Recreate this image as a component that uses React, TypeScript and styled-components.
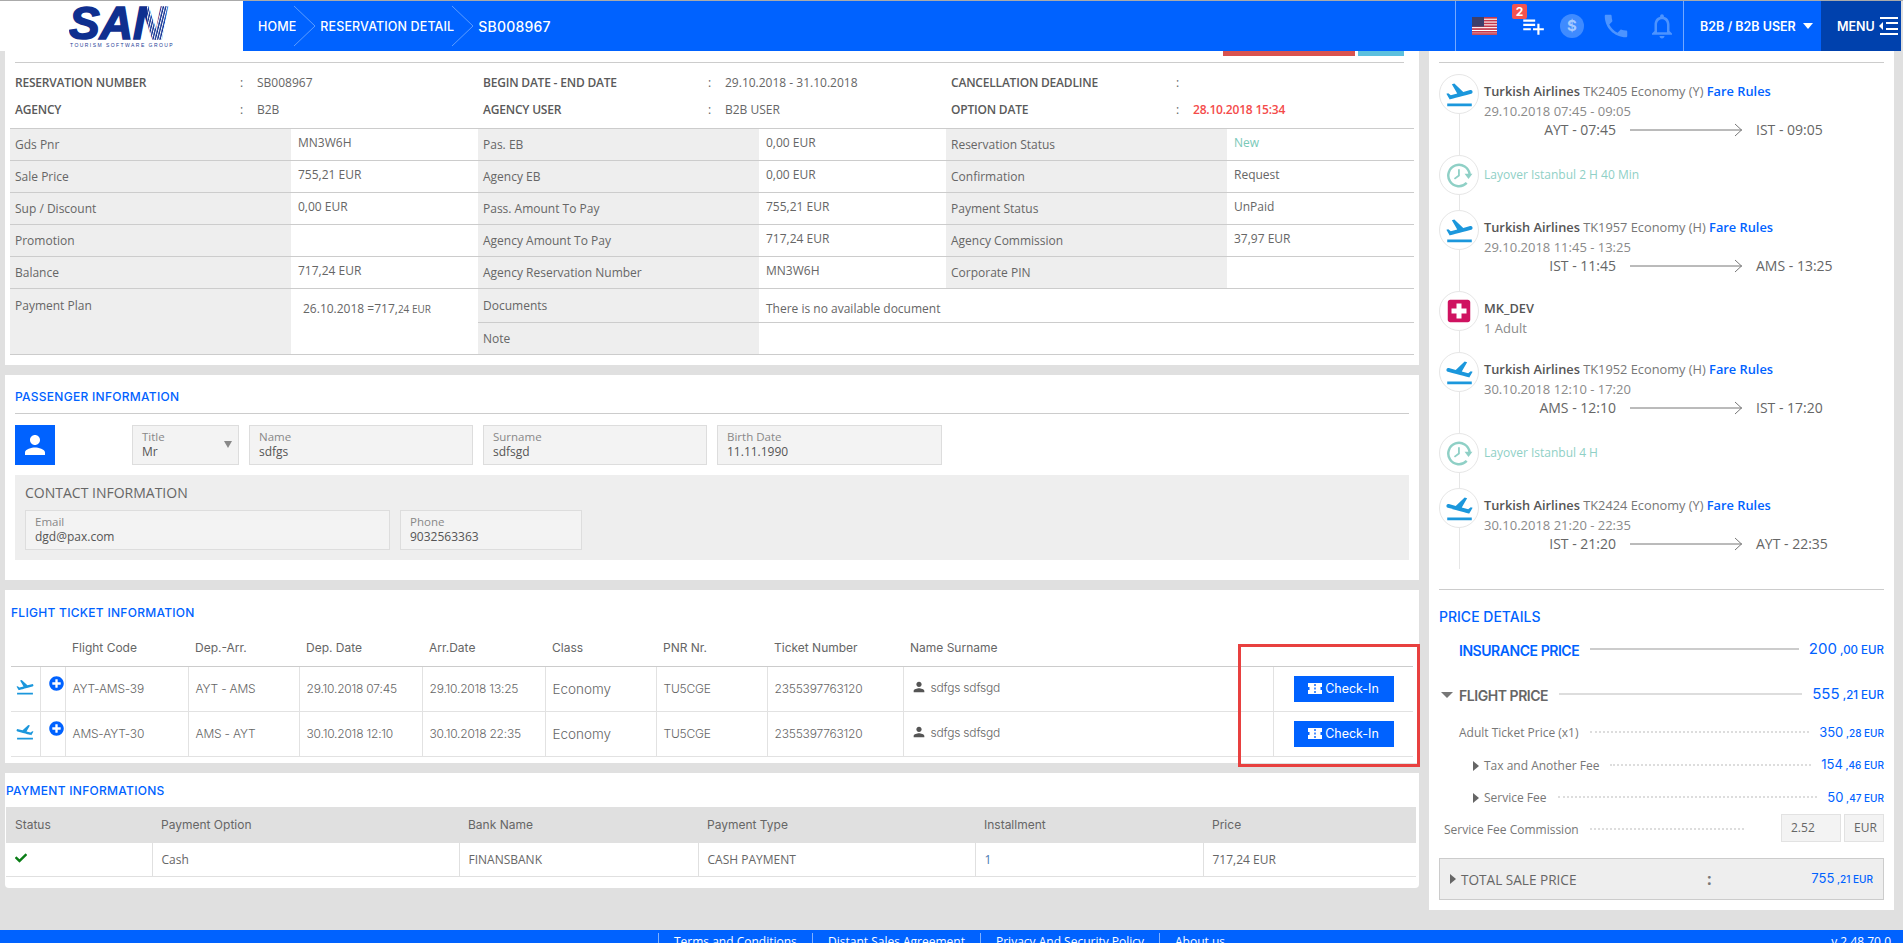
import React from "react";
import styled, { createGlobalStyle } from "styled-components";
import {
  MdFlightTakeoff,
  MdPlaylistAdd,
  MdPhone,
  MdNotificationsNone,
  MdPerson,
  MdLocalHospital,
} from "react-icons/md";
import { FaCheck, FaPlusCircle } from "react-icons/fa";

const BLUE = "#0062ff";
const BODY_FONT = `"Open Sans", "Liberation Sans", sans-serif`;
const HEAD_FONT = `Inter, "Open Sans", sans-serif`;

const GlobalStyle = createGlobalStyle`
  * { box-sizing: border-box; }
  html, body { margin: 0; padding: 0; background: #e0e0e0; }
  body { font-family: ${BODY_FONT}; color: #666; }
`;

const Page = styled.div`
  width: 1903px;
  height: 943px;
  overflow: hidden;
  position: relative;
  background: #e0e0e0;
  border-top: 1px solid #aaa;
  display: flex;
  flex-direction: column;
`;

/* header */
const Header = styled.header`
  width: 1901px;
  height: 50px;
  flex: none;
  display: flex;
`;
const LogoBox = styled.div`
  width: 243px;
  background: #fff;
  padding: 2px 0 0 69px;
`;
const TopBar = styled.div`
  flex: 1;
  display: flex;
  align-items: center;
  background: ${BLUE};
  color: #fff;
  font-family: ${HEAD_FONT};
`;
const Crumbs = styled.nav`
  flex: 1;
  height: 100%;
  display: flex;
  align-items: center;
  padding-left: 15px;
`;
const Crumb = styled.span<{ $big?: boolean }>`
  font-size: ${(p) => (p.$big ? "14px" : "12.5px")};
  font-weight: 500;
  letter-spacing: ${(p) => (p.$big ? "0.2px" : "0.12px")};
`;
const CrumbArrow = styled.svg`
  width: 22px;
  height: 44px;
  margin: 0 4px 0 -2px;
  flex: none;
`;
const IconCell = styled.div`
  width: 228px;
  height: 100%;
  display: grid;
  grid-template-columns: 57px 40px 38px 49px 43px;
  align-items: center;
  justify-items: center;
  border-left: 1px solid rgba(255, 255, 255, 0.45);
`;
const ActionIcon = styled.span<{ $muted?: boolean }>`
  position: relative;
  display: flex;
  color: ${(p) => (p.$muted ? "#4d94ff" : "#fff")};
`;
const Badge = styled.span`
  position: absolute;
  top: -9px;
  left: -8px;
  width: 15px;
  height: 15px;
  border-radius: 2px;
  background: #f4534f;
  color: #fff;
  font-size: 12px;
  font-weight: 700;
  line-height: 15px;
  text-align: center;
`;
const DollarIcon = styled.span`
  width: 24px;
  height: 24px;
  border-radius: 50%;
  background: #3f8bff;
  color: #a5c9ff;
  font-size: 15px;
  font-weight: 700;
  line-height: 24px;
  text-align: center;
`;
const UserCell = styled.div`
  width: 138px;
  height: 100%;
  display: flex;
  align-items: center;
  padding-left: 16px;
  font-size: 12.5px;
  font-weight: 600;
  border-left: 1px solid rgba(255, 255, 255, 0.45);
`;
const Caret = styled.i`
  margin-left: 7px;
  border: 5.5px solid transparent;
  border-top: 6px solid #fff;
  border-bottom: 0;
`;
const MenuCell = styled.div`
  width: 80px;
  height: 100%;
  display: flex;
  align-items: center;
  padding-left: 16px;
  gap: 4px;
  background: #0041ad;
  font-size: 12.5px;
  font-weight: 600;
`;

/* layout */
const Body = styled.div`
  flex: none;
  height: 879px;
  display: flex;
  align-items: flex-start;
  gap: 10px;
  padding-left: 5px;
`;
const MainColumn = styled.main`
  width: 1414px;
  display: flex;
  flex-direction: column;
  gap: 10px;
`;
const Card = styled.section<{ $height: number; $round?: boolean }>`
  height: ${(p) => p.$height}px;
  background: #fff;
  border-radius: ${(p) => (p.$round ? "0 0 4px 4px" : "0")};
`;
const ActionStrip = styled.div`
  height: 12px;
  display: flex;
  justify-content: flex-end;
  align-items: flex-start;
  gap: 3px;
  margin: 0 15px 0 10px;
  border-bottom: 1px solid #ccc;
`;
const StripButton = styled.span<{ $color: string; $width: number }>`
  width: ${(p) => p.$width}px;
  height: 5px;
  background: ${(p) => p.$color};
`;
const SummaryGrid = styled.div`
  height: 65px;
  padding: 6px 0 0 10px;
  display: grid;
  grid-template-columns: 225px 17px 226px 225px 17px 226px 225px 17px 1fr;
  grid-auto-rows: 27px;
  align-items: center;
  font-size: 12px;
`;
const SummaryLabel = styled.span`
  font-weight: 600;
  color: #5a5a5a;
  letter-spacing: -0.2px;
`;
const SummaryValue = styled.span<{ $alert?: boolean }>`
  color: ${(p) => (p.$alert ? "#f44a4a" : "#666")};
  font-weight: ${(p) => (p.$alert ? 600 : 400)};
  letter-spacing: ${(p) => (p.$alert ? "-0.2px" : "0")};
`;
const InfoTable = styled.table`
  width: 1404px;
  margin-left: 5px;
  table-layout: fixed;
  border-collapse: collapse;
  font-size: 12px;
  border-bottom: 1px solid #ccc;
  td {
    height: 32px;
    padding: 0;
    border-top: 1px solid #ccc;
  }
`;
const DocRow = styled.tr`
  && td {
    height: 34px;
  }
`;
const LabelCell = styled.td<{ $tall?: boolean }>`
  background: #eee;
  padding: 0 0 0 5px !important;
  vertical-align: ${(p) => (p.$tall ? "top" : "middle")};
  line-height: ${(p) => (p.$tall ? "33px" : "normal")};
  color: #666;
`;
const ValueCell = styled.td<{ $tone?: string }>`
  padding: 0 0 4px 7px !important;
  color: ${(p) => p.$tone || "#666"};
`;
const DocCell = styled.td`
  padding: 6px 0 0 7px !important;
`;
const PlanCell = styled.td`
  vertical-align: top;
  padding: 11px 0 0 12px !important;
  small {
    font-size: 10px;
  }
`;
const Title = styled.h2<{ $left: number; $top: number }>`
  margin: 0;
  padding: ${(p) => p.$top}px 0 0 ${(p) => p.$left}px;
  font: 500 12px/18px ${HEAD_FONT};
  color: ${BLUE};
  letter-spacing: 0.28px;
`;
const PassengerTitle = styled(Title)`
  margin: 0 10px;
  padding-left: 0;
  padding-bottom: 7px;
  border-bottom: 1px solid #ccc;
`;
const PassengerRow = styled.div`
  display: flex;
  margin: 11px 0 10px 10px;
  height: 40px;
`;
const Avatar = styled.div`
  width: 40px;
  height: 40px;
  margin-right: 77px;
  background: ${BLUE};
  color: #fff;
  display: flex;
  align-items: center;
  justify-content: center;
`;
const Field = styled.div<{ $width: number }>`
  position: relative;
  width: ${(p) => p.$width}px;
  height: 40px;
  margin-right: 10px;
  padding: 3px 0 0 9px;
  background: #f3f3f3;
  border: 1px solid #ddd;
  display: flex;
  flex-direction: column;
`;
const FieldLabel = styled.span`
  font-size: 11.5px;
  line-height: 15px;
  color: #888;
`;
const FieldValue = styled.span`
  font-size: 12px;
  line-height: 15px;
  color: #555;
`;
const SelectArrow = styled.i`
  position: absolute;
  right: 6px;
  top: 15px;
  border: 4px solid transparent;
  border-top: 7px solid #888;
  border-bottom: 0;
`;
const ContactBox = styled.div`
  height: 85px;
  margin: 0 10px;
  padding: 9px 10px 0;
  background: #eee;
`;
const ContactTitle = styled.h3`
  margin: 0 0 8px;
  font-size: 14px;
  font-weight: 400;
  line-height: 18px;
  color: #666;
`;
const ContactFields = styled.div`
  display: flex;
`;
const GridTable = styled.table<{ $width: number; $left: number; $top: number }>`
  width: ${(p) => p.$width}px;
  margin: ${(p) => p.$top}px 0 0 ${(p) => p.$left}px;
  table-layout: fixed;
  border-collapse: collapse;
  font-family: ${HEAD_FONT};
  font-size: 12px;
  color: #666;
`;
const FlightHead = styled.th`
  height: 39px;
  padding: 3px 0 0 7px;
  text-align: left;
  font-weight: 400;
  border-bottom: 1px solid #ccc;
`;
const FlightCell = styled.td<{ $center?: boolean; $wide?: boolean }>`
  height: 45px;
  padding: ${(p) => (p.$center ? "0" : "0 0 0 7px")};
  text-align: ${(p) => (p.$center ? "center" : "left")};
  font-weight: 300;
  font-size: ${(p) => (p.$wide ? "13.5px" : "12px")};
  letter-spacing: ${(p) => (p.$wide ? "0" : "-0.2px")};
  border-left: 1px solid #e2e2e2;
  border-bottom: 1px solid #e2e2e2;
  &:first-child {
    border-left: 0;
  }
`;
const PlusMark = styled.span`
  display: block;
  margin: -10px 0 0 7px;
  color: ${BLUE};
  line-height: 0;
`;
const ReturnPlane = styled(MdFlightTakeoff)`
  transform: scaleX(-1);
`;
const PaxName = styled.span`
  display: inline-flex;
  align-items: center;
  gap: 4px;
  svg {
    color: #555;
  }
`;
const CheckInButton = styled.button`
  margin-left: 13px;
  width: 100px;
  height: 26px;
  padding: 0;
  border: 0;
  background: ${BLUE};
  color: #fff;
  font-family: ${HEAD_FONT};
  font-size: 12.5px;
  display: inline-flex;
  align-items: center;
  justify-content: center;
  gap: 3px;
`;
const PayHead = styled.th`
  height: 36px;
  padding: 0 0 1px 9px;
  background: #e0e0e0;
  font-weight: 400;
  text-align: left;
`;
const PayCell = styled.td<{ $tone?: string }>`
  height: 33px;
  padding: 0 0 0 9px;
  font-family: ${BODY_FONT};
  color: ${(p) => p.$tone || "#666"};
  border-left: 1px solid #e0e0e0;
  border-bottom: 1px solid #e0e0e0;
  &:first-child {
    border-left: 0;
    color: #0a7d16;
  }
`;
const Marker = styled.div`
  position: absolute;
  left: 1238px;
  top: 643px;
  width: 182px;
  height: 123px;
  border: 3px solid #e8403f;
`;

/* sidebar */
const Side = styled.aside`
  width: 465px;
  height: 859px;
  padding: 0 10px;
  background: #fff;
`;
const SideStrip = styled.div`
  height: 12px;
  border-bottom: 1px solid #ccc;
`;
const Timeline = styled.div`
  margin-top: 11px;
  padding-bottom: 20px;
  border-bottom: 1px solid #ccc;
`;
const Step = styled.div<{ $height: number }>`
  height: ${(p) => p.$height}px;
  display: flex;
  gap: 5px;
`;
const StepRail = styled.div`
  width: 40px;
  flex: none;
  display: flex;
  flex-direction: column;
  align-items: center;
`;
const StepCircle = styled.div<{ $color?: string }>`
  width: 40px;
  height: 40px;
  flex: none;
  border: 1px solid #e6e6e6;
  border-radius: 50%;
  display: flex;
  align-items: center;
  justify-content: center;
  color: ${(p) => p.$color || "#1b97dc"};
`;
const StepLine = styled.div`
  flex: 1;
  width: 1px;
  background: #e6e6e6;
`;
const StepBody = styled.div`
  flex: 1;
  padding-top: 7px;
`;
const StepTitle = styled.div`
  font-size: 12.8px;
  line-height: 20px;
  color: #777;
  white-space: pre;
  b {
    font-weight: 600;
    color: #555;
  }
  a {
    font-weight: 600;
    color: ${BLUE};
  }
`;
const StepSub = styled.div`
  font-size: 13px;
  line-height: 20px;
  color: #8a8a8a;
`;
const LayoverText = styled.div`
  font-size: 12px;
  line-height: 40px;
  color: #8fd0c6;
`;
const Route = styled.div`
  display: grid;
  grid-template-columns: 132px 112px 1fr;
  column-gap: 14px;
  align-items: center;
  font-size: 14px;
  line-height: 18px;
  color: #666;
`;
const RouteFrom = styled.span`
  text-align: right;
`;
const RouteArrow = styled.svg`
  width: 112px;
  height: 14px;
  display: block;
`;
const PriceTitle = styled.h2`
  margin: 0;
  padding: 17px 0 0;
  font: 500 14px/20px ${HEAD_FONT};
  color: ${BLUE};
`;
const PriceRow = styled.div<{ $height: number; $top?: number; $indent: number }>`
  height: ${(p) => p.$height}px;
  margin-top: ${(p) => p.$top || 0}px;
  padding-left: ${(p) => p.$indent}px;
  display: flex;
  align-items: center;
  position: relative;
`;
const PriceHeading = styled.span<{ $accent?: boolean }>`
  font: 600 14px ${HEAD_FONT};
  letter-spacing: -0.45px;
  color: ${(p) => (p.$accent ? BLUE : "#666")};
`;
const PriceLabel = styled.span`
  font-size: 12px;
  color: #777;
  white-space: nowrap;
  margin-top: -1px;
`;
const Leader = styled.i<{ $dotted?: boolean; $color?: string; $right?: number }>`
  flex: 1;
  margin: -2px ${(p) => p.$right ?? 10}px 0 11px;
  border-top: 2px ${(p) => (p.$dotted ? "dotted" : "solid")} ${(p) => p.$color || "#ddd"};
`;
const Amount = styled.span<{ $big?: boolean }>`
  font: 500 ${(p) => (p.$big ? "11.5px" : "10px")} ${HEAD_FONT};
  color: ${BLUE};
  white-space: nowrap;
  margin-top: -3px;
  b {
    font-weight: 400;
    font-size: ${(p) => (p.$big ? "15px" : "13px")};
  }
`;
const RowCaret = styled.i<{ $down?: boolean; $left: number }>`
  position: absolute;
  left: ${(p) => p.$left}px;
  top: 50%;
  margin-top: ${(p) => (p.$down ? "-3px" : "-5px")};
  border-style: solid;
  border-color: transparent;
  border-width: ${(p) => (p.$down ? "6px 6px 0" : "5px 0 5px 6px")};
  border-top-color: ${(p) => (p.$down ? "#777" : "transparent")};
  border-left-color: ${(p) => (p.$down ? "transparent" : "#666")};
`;
const MiniBox = styled.span<{ $width: number; $left?: number }>`
  width: ${(p) => p.$width}px;
  height: 28px;
  align-self: flex-start;
  margin-left: ${(p) => p.$left || 0}px;
  padding-left: 9px;
  background: #f3f3f3;
  border: 1px solid #e2e2e2;
  font-size: 12px;
  line-height: 26px;
  color: #666;
`;
const TotalBox = styled.div`
  position: relative;
  height: 42px;
  margin-top: 12px;
  padding: 0 10px 0 21px;
  display: flex;
  align-items: center;
  background: #eee;
  border: 1px solid #ccc;
`;
const TotalLabel = styled.span`
  width: 246px;
  font-size: 13.6px;
  color: #666;
`;
const TotalColon = styled.span`
  flex: 1;
  font-weight: 700;
  color: #777;
`;

/* footer */
const Footer = styled.footer`
  flex: none;
  height: 30px;
  padding: 3px 12px 0 658px;
  display: flex;
  background: ${BLUE};
  color: #fff;
  font-size: 12px;
  line-height: 18px;
`;
const FooterLink = styled.span<{ $width: number }>`
  width: ${(p) => p.$width}px;
  height: 24px;
  padding-left: 15px;
  border-left: 1px solid rgba(255, 255, 255, 0.5);
  &:last-of-type {
    border-right: 1px solid rgba(255, 255, 255, 0.5);
  }
`;
const Version = styled.span`
  margin-left: auto;
`;

const Logo = () => (
  <svg width="125" height="48" viewBox="0 0 125 48">
    <defs>
      <pattern id="stripe" width="2.4" height="4" patternUnits="userSpaceOnUse" patternTransform="skewX(-14)">
        <rect width="1" height="4" fill="#fff" />
      </pattern>
    </defs>
    <text
      x="0"
      y="36"
      fontFamily="Liberation Sans"
      fontWeight="700"
      fontStyle="italic"
      fontSize="46"
      fill="#0f2f8f"
      stroke="#0f2f8f"
      strokeWidth="1.6"
    >
      SAN
    </text>
    <rect x="78" y="0" width="21" height="38" fill="url(#stripe)" />
    <text x="1" y="44" fontFamily="Liberation Sans" fontSize="5" letterSpacing="1.45" fill="#1e3c96">
      TOURISM SOFTWARE GROUP
    </text>
  </svg>
);

const Flag = () => (
  <svg width="25" height="18" viewBox="0 0 25 18">
    <rect width="25" height="18" fill="#fff" />
    {[0, 2.8, 5.6, 8.4, 11.2, 14, 16.2].map((y) => (
      <rect key={y} y={y} width="25" height="1.7" fill="#c4384c" />
    ))}
    <rect width="12" height="9.6" fill="#3d3f6b" />
  </svg>
);

const MenuGlyph = () => (
  <svg width="19" height="18" viewBox="0 0 19 18" fill="#fff">
    <rect x="1" y="0" width="18" height="2" />
    <rect x="7" y="5" width="12" height="2" />
    <rect x="7" y="11" width="12" height="2" />
    <rect x="1" y="16" width="18" height="2" />
    <path d="M0 9l4-4v8z" />
  </svg>
);

const TicketGlyph = () => (
  <svg width="14" height="11" viewBox="0 0 14 11">
    <rect width="14" height="11" fill="#fff" />
    <rect x="0" y="4" width="1.500" height="3" fill="#0062ff" />
    <rect x="12.500" y="4" width="1.500" height="3" fill="#0062ff" />
    <rect x="6.300" y="1" width="1.400" height="2" fill="#0062ff" />
    <rect x="6.300" y="4.500" width="1.400" height="2" fill="#0062ff" />
    <rect x="6.300" y="8" width="1.400" height="2" fill="#0062ff" />
  </svg>
);

const LayoverIcon = () => (
  <svg width="27" height="27" viewBox="0 0 24 24" fill="none" stroke="#8fd0c6" strokeWidth="2.2">
    <path d="M21 11a9.500 9.500 0 1 0-2.600 7.600" />
    <path d="M11.500 6.500v5.500l-4 3" strokeWidth="1.600" />
    <path d="M16.500 10.500h7l-3.500 4.500z" fill="#8fd0c6" stroke="none" />
  </svg>
);

const ArrowLine = () => (
  <RouteArrow viewBox="0 0 112 14" fill="none" stroke="#777">
    <path d="M0 7h112M105 1l6.500 6-6.500 6" />
  </RouteArrow>
);

interface Leg {
  kind: "out" | "back";
  airline: string;
  detail: string;
  date: string;
  from: string;
  to: string;
}

const legs: Leg[] = [
  { kind: "out", airline: "Turkish Airlines", detail: "TK2405 Economy (Y)", date: "29.10.2018 07:45 - 09:05", from: "AYT - 07:45", to: "IST - 09:05" },
  { kind: "out", airline: "Turkish Airlines", detail: "TK1957 Economy (H)", date: "29.10.2018 11:45 - 13:25", from: "IST - 11:45", to: "AMS - 13:25" },
  { kind: "back", airline: "Turkish Airlines", detail: "TK1952 Economy (H)", date: "30.10.2018 12:10 - 17:20", from: "AMS - 12:10", to: "IST - 17:20" },
  { kind: "back", airline: "Turkish Airlines", detail: "TK2424 Economy (Y)", date: "30.10.2018 21:20 - 22:35", from: "IST - 21:20", to: "AYT - 22:35" },
];

const FlightStep = ({ leg }: { leg: Leg }) => (
  <Step $height={81}>
    <StepRail>
      <StepCircle>{leg.kind === "out" ? <MdFlightTakeoff size={31} /> : <ReturnPlane size={31} />}</StepCircle>
      <StepLine />
    </StepRail>
    <StepBody>
      <StepTitle>
        <b>{leg.airline}</b> {leg.detail} <a>Fare Rules</a>
      </StepTitle>
      <StepSub>{leg.date}</StepSub>
      <Route>
        <RouteFrom>{leg.from}</RouteFrom>
        <ArrowLine />
        <span>{leg.to}</span>
      </Route>
    </StepBody>
  </Step>
);

const LayoverStep = ({ text }: { text: string }) => (
  <Step $height={55}>
    <StepRail>
      <StepCircle>
        <LayoverIcon />
      </StepCircle>
      <StepLine />
    </StepRail>
    <LayoverText>{text}</LayoverText>
  </Step>
);

const infoRows = [
  ["Gds Pnr", "MN3W6H", "Pas. EB", "0,00 EUR", "Reservation Status", "New"],
  ["Sale Price", "755,21 EUR", "Agency EB", "0,00 EUR", "Confirmation", "Request"],
  ["Sup / Discount", "0,00 EUR", "Pass. Amount To Pay", "755,21 EUR", "Payment Status", "UnPaid"],
  ["Promotion", "", "Agency Amount To Pay", "717,24 EUR", "Agency Commission", "37,97 EUR"],
  ["Balance", "717,24 EUR", "Agency Reservation Number", "MN3W6H", "Corporate PIN", ""],
];

const tickets = [
  { kind: "out", code: "AYT-AMS-39", route: "AYT - AMS", dep: "29.10.2018 07:45", arr: "29.10.2018 13:25" },
  { kind: "back", code: "AMS-AYT-30", route: "AMS - AYT", dep: "30.10.2018 12:10", arr: "30.10.2018 22:35" },
];

export default function App() {
  return (
    <Page>
      <GlobalStyle />
      <Header>
        <LogoBox>
          <Logo />
        </LogoBox>
        <TopBar>
          <Crumbs>
            <Crumb>HOME</Crumb>
            <CrumbArrow viewBox="0 0 22 44" fill="none" stroke="#5c9dff">
              <path d="M0 2l21 20-21 20" />
            </CrumbArrow>
            <Crumb>RESERVATION DETAIL</Crumb>
            <CrumbArrow viewBox="0 0 22 44" fill="none" stroke="#5c9dff">
              <path d="M0 2l21 20-21 20" />
            </CrumbArrow>
            <Crumb $big>SB008967</Crumb>
          </Crumbs>
          <IconCell>
            <Flag />
            <ActionIcon>
              <MdPlaylistAdd size={26} />
              <Badge>2</Badge>
            </ActionIcon>
            <DollarIcon>$</DollarIcon>
            <ActionIcon $muted>
              <MdPhone size={30} />
            </ActionIcon>
            <ActionIcon $muted>
              <MdNotificationsNone size={30} />
            </ActionIcon>
          </IconCell>
          <UserCell>
            B2B / B2B USER
            <Caret />
          </UserCell>
          <MenuCell>
            MENU
            <MenuGlyph />
          </MenuCell>
        </TopBar>
      </Header>

      <Body>
        <MainColumn>
          <Card $height={314}>
            <ActionStrip>
              <StripButton $color="#d9534f" $width={132} />
              <StripButton $color="#5bc0de" $width={46} />
            </ActionStrip>
            <SummaryGrid>
              <SummaryLabel>RESERVATION NUMBER</SummaryLabel>
              <span>:</span>
              <SummaryValue>SB008967</SummaryValue>
              <SummaryLabel>BEGIN DATE - END DATE</SummaryLabel>
              <span>:</span>
              <SummaryValue>29.10.2018 - 31.10.2018</SummaryValue>
              <SummaryLabel>CANCELLATION DEADLINE</SummaryLabel>
              <span>:</span>
              <SummaryValue />
              <SummaryLabel>AGENCY</SummaryLabel>
              <span>:</span>
              <SummaryValue>B2B</SummaryValue>
              <SummaryLabel>AGENCY USER</SummaryLabel>
              <span>:</span>
              <SummaryValue>B2B USER</SummaryValue>
              <SummaryLabel>OPTION DATE</SummaryLabel>
              <span>:</span>
              <SummaryValue $alert>28.10.2018 15:34</SummaryValue>
            </SummaryGrid>
            <InfoTable>
              <colgroup>
                <col width="281" />
                <col width="187" />
                <col width="281" />
                <col width="187" />
                <col width="281" />
                <col width="187" />
              </colgroup>
              <tbody>
                {infoRows.map((r) => (
                  <tr key={r[0]}>
                    <LabelCell>{r[0]}</LabelCell>
                    <ValueCell>{r[1]}</ValueCell>
                    <LabelCell>{r[2]}</LabelCell>
                    <ValueCell>{r[3]}</ValueCell>
                    <LabelCell>{r[4]}</LabelCell>
                    <ValueCell $tone={r[5] === "New" ? "#79c9b8" : undefined}>{r[5]}</ValueCell>
                  </tr>
                ))}
                <DocRow>
                  <LabelCell rowSpan={2} $tall>
                    Payment Plan
                  </LabelCell>
                  <PlanCell rowSpan={2}>
                    26.10.2018 =717,<small>24 EUR</small>
                  </PlanCell>
                  <LabelCell $tall>Documents</LabelCell>
                  <DocCell colSpan={3}>There is no available document</DocCell>
                </DocRow>
                <tr>
                  <LabelCell>Note</LabelCell>
                  <ValueCell colSpan={3} />
                </tr>
              </tbody>
            </InfoTable>
          </Card>

          <Card $height={205}>
            <PassengerTitle $left={10} $top={13}>
              PASSENGER INFORMATION
            </PassengerTitle>
            <PassengerRow>
              <Avatar>
                <MdPerson size={30} />
              </Avatar>
              <Field $width={107}>
                <FieldLabel>Title</FieldLabel>
                <FieldValue>Mr</FieldValue>
                <SelectArrow />
              </Field>
              <Field $width={224}>
                <FieldLabel>Name</FieldLabel>
                <FieldValue>sdfgs</FieldValue>
              </Field>
              <Field $width={224}>
                <FieldLabel>Surname</FieldLabel>
                <FieldValue>sdfsgd</FieldValue>
              </Field>
              <Field $width={225}>
                <FieldLabel>Birth Date</FieldLabel>
                <FieldValue>11.11.1990</FieldValue>
              </Field>
            </PassengerRow>
            <ContactBox>
              <ContactTitle>CONTACT INFORMATION</ContactTitle>
              <ContactFields>
                <Field $width={365}>
                  <FieldLabel>Email</FieldLabel>
                  <FieldValue>dgd@pax.com</FieldValue>
                </Field>
                <Field $width={182}>
                  <FieldLabel>Phone</FieldLabel>
                  <FieldValue>9032563363</FieldValue>
                </Field>
              </ContactFields>
            </ContactBox>
          </Card>

          <Card $height={173}>
            <Title $left={6} $top={14}>
              FLIGHT TICKET INFORMATION
            </Title>
            <GridTable $width={1402} $left={6} $top={5}>
              <colgroup>
                {[29, 25, 123, 111, 123, 123, 111, 111, 136, 370, 140].map((w, i) => (
                  <col key={i} width={w} />
                ))}
              </colgroup>
              <thead>
                <tr>
                  <FlightHead />
                  <FlightHead />
                  <FlightHead>Flight Code</FlightHead>
                  <FlightHead>Dep.-Arr.</FlightHead>
                  <FlightHead>Dep. Date</FlightHead>
                  <FlightHead>Arr.Date</FlightHead>
                  <FlightHead>Class</FlightHead>
                  <FlightHead>PNR Nr.</FlightHead>
                  <FlightHead>Ticket Number</FlightHead>
                  <FlightHead>Name Surname</FlightHead>
                  <FlightHead />
                </tr>
              </thead>
              <tbody>
                {tickets.map((t) => (
                  <tr key={t.code}>
                    <FlightCell $center>
                      {t.kind === "out" ? (
                        <MdFlightTakeoff size={20} color="#1b97dc" />
                      ) : (
                        <ReturnPlane size={20} color="#1b97dc" />
                      )}
                    </FlightCell>
                    <FlightCell $center>
                      <PlusMark>
                        <FaPlusCircle size={15} />
                      </PlusMark>
                    </FlightCell>
                    <FlightCell>{t.code}</FlightCell>
                    <FlightCell>{t.route}</FlightCell>
                    <FlightCell>{t.dep}</FlightCell>
                    <FlightCell>{t.arr}</FlightCell>
                    <FlightCell $wide>Economy</FlightCell>
                    <FlightCell>TU5CGE</FlightCell>
                    <FlightCell>2355397763120</FlightCell>
                    <FlightCell>
                      <PaxName>
                        <MdPerson size={16} />
                        sdfgs sdfsgd
                      </PaxName>
                    </FlightCell>
                    <FlightCell>
                      <CheckInButton>
                        <TicketGlyph />
                        Check-In
                      </CheckInButton>
                    </FlightCell>
                  </tr>
                ))}
              </tbody>
            </GridTable>
          </Card>

          <Card $height={115} $round>
            <Title $left={1} $top={9}>
              PAYMENT INFORMATIONS
            </Title>
            <GridTable $width={1410} $left={1} $top={7}>
              <colgroup>
                {[146, 307, 239, 277, 228, 213].map((w, i) => (
                  <col key={i} width={w} />
                ))}
              </colgroup>
              <thead>
                <tr>
                  <PayHead>Status</PayHead>
                  <PayHead>Payment Option</PayHead>
                  <PayHead>Bank Name</PayHead>
                  <PayHead>Payment Type</PayHead>
                  <PayHead>Installment</PayHead>
                  <PayHead>Price</PayHead>
                </tr>
              </thead>
              <tbody>
                <tr>
                  <PayCell>
                    <FaCheck size={12} />
                  </PayCell>
                  <PayCell>Cash</PayCell>
                  <PayCell>FINANSBANK</PayCell>
                  <PayCell>CASH PAYMENT</PayCell>
                  <PayCell $tone="#4a78b0">1</PayCell>
                  <PayCell>717,24 EUR</PayCell>
                </tr>
              </tbody>
            </GridTable>
          </Card>
        </MainColumn>

        <Side>
          <SideStrip />
          <Timeline>
            <FlightStep leg={legs[0]} />
            <LayoverStep text="Layover Istanbul 2 H 40 Min" />
            <FlightStep leg={legs[1]} />
            <Step $height={61}>
              <StepRail>
                <StepCircle $color="#cf1260">
                  <MdLocalHospital size={30} />
                </StepCircle>
                <StepLine />
              </StepRail>
              <StepBody>
                <StepTitle>
                  <b>MK_DEV</b>
                </StepTitle>
                <StepSub>1 Adult</StepSub>
              </StepBody>
            </Step>
            <FlightStep leg={legs[2]} />
            <LayoverStep text="Layover Istanbul 4 H" />
            <FlightStep leg={legs[3]} />
          </Timeline>

          <PriceTitle>PRICE DETAILS</PriceTitle>
          <PriceRow $height={28} $top={9} $indent={20}>
            <PriceHeading $accent>INSURANCE PRICE</PriceHeading>
            <Leader $color="#ccc" />
            <Amount $big>
              <b>200</b> ,00 EUR
            </Amount>
          </PriceRow>
          <PriceRow $height={28} $top={17} $indent={20}>
            <RowCaret $down $left={2} />
            <PriceHeading>FLIGHT PRICE</PriceHeading>
            <Leader />
            <Amount $big>
              <b>555</b> ,21 EUR
            </Amount>
          </PriceRow>
          <PriceRow $height={32} $top={8} $indent={20}>
            <PriceLabel>Adult Ticket Price (x1)</PriceLabel>
            <Leader $dotted />
            <Amount>
              <b>350</b> ,28 EUR
            </Amount>
          </PriceRow>
          <PriceRow $height={33} $indent={45}>
            <RowCaret $left={34} />
            <PriceLabel>Tax and Another Fee</PriceLabel>
            <Leader $dotted />
            <Amount>
              <b>154</b> ,46 EUR
            </Amount>
          </PriceRow>
          <PriceRow $height={32} $indent={45}>
            <RowCaret $left={34} />
            <PriceLabel>Service Fee</PriceLabel>
            <Leader $dotted />
            <Amount>
              <b>50</b> ,47 EUR
            </Amount>
          </PriceRow>
          <PriceRow $height={32} $indent={5}>
            <PriceLabel>Service Fee Commission</PriceLabel>
            <Leader $dotted $right={37} />
            <MiniBox $width={60}>2.52</MiniBox>
            <MiniBox $width={40} $left={3}>
              EUR
            </MiniBox>
          </PriceRow>
          <TotalBox>
            <RowCaret $left={10} />
            <TotalLabel>TOTAL SALE PRICE</TotalLabel>
            <TotalColon>:</TotalColon>
            <Amount>
              <b>755</b> ,21 EUR
            </Amount>
          </TotalBox>
        </Side>
      </Body>

      <Footer>
        <FooterLink $width={154}>Terms and Conditions</FooterLink>
        <FooterLink $width={168}>Distant Sales Agreement</FooterLink>
        <FooterLink $width={179}>Privacy And Security Policy</FooterLink>
        <FooterLink $width={81}>About us</FooterLink>
        <Version>v 2.48.70.0</Version>
      </Footer>
      <Marker />
    </Page>
  );
}
